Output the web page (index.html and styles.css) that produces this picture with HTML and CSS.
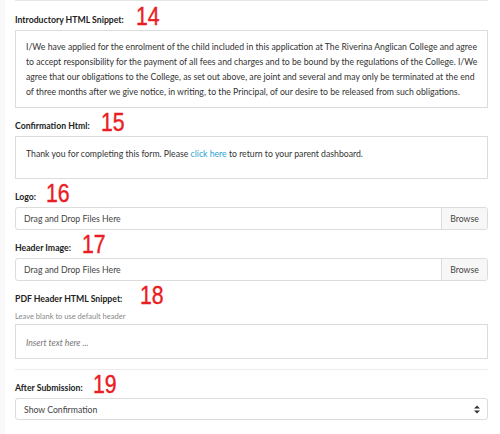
FILE: index.html
```html
<!DOCTYPE html>
<html>
<head>
<meta charset="utf-8">
<link rel="stylesheet" href="styles.css">
</head>
<body>
<div class="page">
  <div class="prev-edge"></div>

  <div class="label-row"><span class="label">Introductory HTML Snippet:</span><span class="num n14">14</span></div>
  <div class="box box-intro">I/We have applied for the enrolment of the child included in this application at The Riverina Anglican College and agree<br>to accept responsibility for the payment of all fees and charges and to be bound by the regulations of the College. I/We<br>agree that our obligations to the College, as set out above, are joint and several and may only be terminated at the end<br>of three months after we give notice, in writing, to the Principal, of our desire to be released from such obligations.</div>

  <div class="label-row"><span class="label">Confirmation Html:</span><span class="num n15">15</span></div>
  <div class="box box-confirm">Thank you for completing this form. Please <a class="link" href="#">click here</a> to return to your parent dashboard.</div>

  <div class="label-row"><span class="label">Logo:</span><span class="num n16">16</span></div>
  <div class="file">
    <span class="file-text">Drag and Drop Files Here</span>
    <span class="browse">Browse</span>
  </div>

  <div class="label-row"><span class="label">Header Image:</span><span class="num n17">17</span></div>
  <div class="file">
    <span class="file-text">Drag and Drop Files Here</span>
    <span class="browse">Browse</span>
  </div>

  <div class="label-row"><span class="label">PDF Header HTML Snippet:</span><span class="num n18">18</span></div>
  <div class="help">Leave blank to use default header</div>
  <div class="box box-pdf"><span class="placeholder">Insert text here ...</span></div>

  <div class="divider"></div>

  <div class="label-row"><span class="label">After Submission:</span><span class="num n19">19</span></div>
  <div class="select">
    <span class="select-text">Show Confirmation</span>
    <svg class="arrows" width="6" height="9" viewBox="0 0 6 9"><path d="M0 3.6 L3 0.4 L6 3.6 Z M0 5.4 L3 8.6 L6 5.4 Z" fill="#333"/></svg>
  </div>
</div>
</body>
</html>
```

FILE: styles.css
```css
html, body {
  margin: 0;
  padding: 0;
}
body {
  background: #f9f9f9;
  font-family: Lato, "Open Sans", sans-serif;
  color: #333;
  width: 500px;
  height: 434px;
  overflow: hidden;
}
.page {
  margin-left: 5px;
  background: #fff;
  height: 434px;
  padding: 0 12px 0 10px;
}
.prev-edge {
  height: 1px;
  background: #e6e6e6;
  margin-bottom: 1px;
}
.label-row {
  display: flex;
  align-items: center;
  height: 28px;
  padding-top: 6px;
  box-sizing: border-box;
}
.label {
  font-weight: 700;
  font-size: 8.7px;
  color: #222;
}
.num {
  display: inline-block;
  font-family: "Liberation Sans", Arial, sans-serif;
  font-size: 25px;
  color: #ea1c24;
  transform: scaleX(0.85);
  transform-origin: left center;
  line-height: 1;
  margin-top: -6px;
  -webkit-text-stroke: 0.4px #ea1c24;
}
.n14 { margin-left: 12px; }
.n15 { margin-left: 11px; }
.n16 { margin-left: 10px; }
.n17 { margin-left: 11px; }
.n18 { margin-left: 18px; }
.n19 { margin-left: 10px; }

.box {
  border: 1px solid #dcdcdc;
  font-size: 8.7px;
  line-height: 15px;
  color: #333;
  padding: 8px 10px;
}
.box-intro {
  white-space: nowrap;
}
.box-confirm {
  height: 43px;
  box-sizing: border-box;
  padding-top: 9px;
}
.link {
  color: #2aa3d6;
  text-decoration: none;
}
.file {
  display: flex;
  height: 23px;
  border: 1px solid #dcdcdc;
  border-radius: 3px;
  box-sizing: border-box;
  font-size: 8.7px;
  color: #444;
  overflow: hidden;
}
.file-text {
  flex: 1;
  display: flex;
  align-items: center;
  padding-left: 8px;
}
.browse {
  width: 45px;
  display: flex;
  align-items: center;
  justify-content: center;
  background: #f7f7f7;
  border-left: 1px solid #dcdcdc;
  color: #444;
  font-size: 8.7px;
}
.help {
  font-size: 7.5px;
  color: #888;
  height: 15px;
  line-height: 15px;
}
.box-pdf {
  height: 35px;
  box-sizing: border-box;
  padding: 10px 10px 8px;
}
.placeholder {
  font-style: italic;
  color: #777;
}
.divider {
  height: 1px;
  background: #ececec;
  margin-top: 10px;
}
.select {
  display: flex;
  align-items: center;
  height: 22px;
  box-sizing: border-box;
  border: 1px solid #dcdcdc;
  border-radius: 3px;
  padding: 0 7px 0 8px;
  font-size: 8.7px;
  color: #444;
}
.select-text {
  flex: 1;
}
.arrows {
  display: block;
}
```
